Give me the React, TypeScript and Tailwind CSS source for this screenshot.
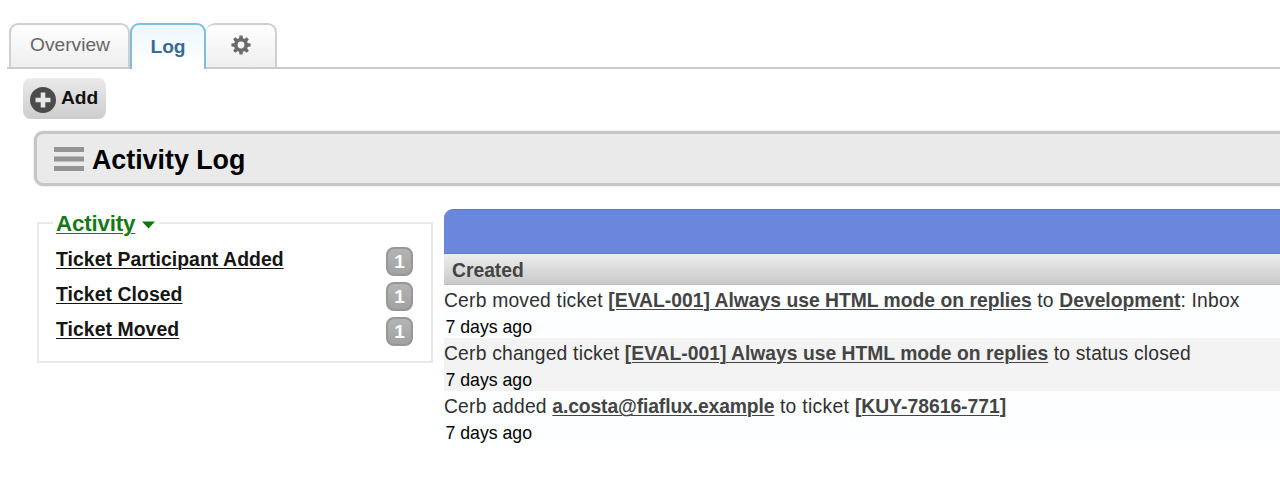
import type { ReactNode } from 'react';

function GearIcon() {
  return (
    <svg width="20" height="20" viewBox="-10 -10 20 20" className="block">
      <g fill="#6b6b6b">
        {[0, 45, 90, 135, 180, 225, 270, 315].map((angle) => (
          <path key={angle} d="M-2.1 -5.8 L-1.5 -9.6 H1.5 L2.1 -5.8 Z" transform={`rotate(${angle})`} />
        ))}
      </g>
      <circle r="5.2" fill="none" stroke="#6b6b6b" strokeWidth="3.6" />
    </svg>
  );
}

function PlusIcon() {
  return (
    <svg width="26" height="26" viewBox="0 0 26 26" className="block">
      <circle cx="13" cy="13" r="13" fill="#4b4b4b" />
      <path d="M10.7 5.5h4.6v5.2h5.2v4.6h-5.2v5.2h-4.6v-5.2H5.5v-4.6h5.2z" fill="#e6e6e6" />
    </svg>
  );
}

function Tabs() {
  return (
    <nav className="ml-[7px] flex h-[46px] items-start border-b-2 border-[#cbcbcb] pl-[2px]">
      <div className="flex h-[44px] w-[121px] justify-center rounded-t-[9px] border-2 border-b-0 border-[#cfcfcf] bg-linear-to-b from-white to-[#eeeeee] pt-[7px] pl-px text-[19.2px] leading-[26px] text-[#666]">
        Overview
      </div>
      <div className="flex h-[46px] w-[76px] justify-center rounded-t-[9px] border-2 border-b-0 border-[#7fbce6] bg-linear-to-b from-[#ecf7ff] to-white to-90% pt-[9px] text-[19.2px] leading-[26px] font-bold text-[#386a96]">
        Log
      </div>
      <div className="flex h-[44px] w-[71px] justify-center rounded-t-[9px] border-2 border-b-0 border-l-0 border-[#cfcfcf] bg-linear-to-b from-white to-[#eeeeee] pt-[10px]">
        <GearIcon />
      </div>
    </nav>
  );
}

const activities = ['Ticket Participant Added', 'Ticket Closed', 'Ticket Moved'];

function Sidebar() {
  return (
    <fieldset className="ml-[37px] h-[154px] w-[396px] border-2 border-[#e9e9e9] pr-[18px] pl-[14px]">
      <legend className="flex h-[28px] items-center px-[3px] text-[22.3px] leading-[28px] font-bold tracking-[-0.15px] text-[#157a15]">
        <span className="pt-[2px] underline decoration-1 underline-offset-2">Activity</span>
        <svg width="13" height="8" viewBox="0 0 13 8" className="mt-[4px] mr-[1px] ml-[7px]">
          <path d="M0 .5h13L6.5 7.5z" fill="#087a08" />
        </svg>
      </legend>
      <ul className="pt-[7px] pl-[3px]">
        {activities.map((name) => (
          <li key={name} className="flex h-[35.3px] items-start justify-between">
            <span className="pt-[0.5px] text-[19.4px] leading-[29px] font-bold tracking-[0.06px] text-[#151515] underline decoration-1 underline-offset-2">
              {name}
            </span>
            <span className="mt-[2.5px] h-[29px] w-[27px] rounded-[8px] border-2 border-[#979797] bg-linear-to-b from-[#b4b4b4] to-[#a2a2a2] text-center text-[19px] leading-[25px] font-bold text-white">
              1
            </span>
          </li>
        ))}
      </ul>
    </fieldset>
  );
}

function Entity({ children, tight }: { children: ReactNode; tight?: boolean }) {
  return (
    <a
      className={
        tight
          ? 'font-bold tracking-[-0.11px] text-[#444] underline decoration-1 underline-offset-2'
          : 'font-bold tracking-[0.01px] text-[#444] underline decoration-1 underline-offset-2'
      }
    >
      {children}
    </a>
  );
}

function Entry({ children, shaded }: { children: ReactNode; shaded?: boolean }) {
  return (
    <div className={shaded ? 'h-[53px] bg-[#f3f3f3]' : 'h-[53px] bg-[#fcfeff]'}>
      <p className="pt-[2px] text-[19.3px] leading-[28px] tracking-[0.2px] whitespace-nowrap text-[#303030]">{children}</p>
      <p className="pl-[1.5px] text-[17.7px] leading-[24px] text-black">7 days ago</p>
    </div>
  );
}

export default function App() {
  return (
    <main className="h-[494px] overflow-hidden bg-white pt-[23px] font-['Liberation_Sans',Arial,sans-serif]">
      <Tabs />
      <button className="mt-[9px] ml-[23px] flex h-[41px] w-[83px] items-center gap-[5px] rounded-[8px] bg-linear-to-b from-[#eaeaea] to-[#cdcdcd] pl-[7px] text-[19.2px] font-bold text-[#111]">
        <span className="mt-[3px]">
          <PlusIcon />
        </span>
        Add
      </button>
      <header className="mt-[12px] -mr-3 ml-[34px] flex h-[55px] items-center rounded-[9px] border-3 border-[#c6c6c6] bg-[#eaeaea] pl-[17px] shadow-[0_0_2px_#ccc]">
        <svg width="30" height="24" viewBox="0 0 30 24">
          <path d="M0 0h30v5H0zM0 9.5h30v5H0zM0 19h30v5H0z" fill="#949494" />
        </svg>
        <h1 className="ml-[8px] pt-[3px] text-[26.8px] font-bold text-black">Activity Log</h1>
      </header>
      <div className="mt-[23px] flex items-start">
        <Sidebar />
        <section className="ml-[11px] min-w-0 flex-1">
          <div className="h-[45px] rounded-tl-[9px] border-y border-[#587bd6] bg-[#6b87db]" />
          <div className="h-[31px] border-b border-[#bdbdbd] bg-linear-to-b from-[#eeeeee] to-[#c9c9c9] pl-[8px] text-[19.3px] leading-[33px] font-bold text-[#444]">
            Created
          </div>
          <Entry>
            Cerb moved ticket <Entity>[EVAL-001] Always use HTML mode on replies</Entity> to <Entity>Development</Entity>: Inbox
          </Entry>
          <Entry shaded>
            Cerb changed ticket <Entity>[EVAL-001] Always use HTML mode on replies</Entity> to status closed
          </Entry>
          <Entry>
            Cerb added <Entity tight>a.costa@fiaflux.example</Entity> <span className="tracking-[0.32px]">to ticket </span>
            <Entity>[KUY-78616-771]</Entity>
          </Entry>
        </section>
      </div>
    </main>
  );
}
